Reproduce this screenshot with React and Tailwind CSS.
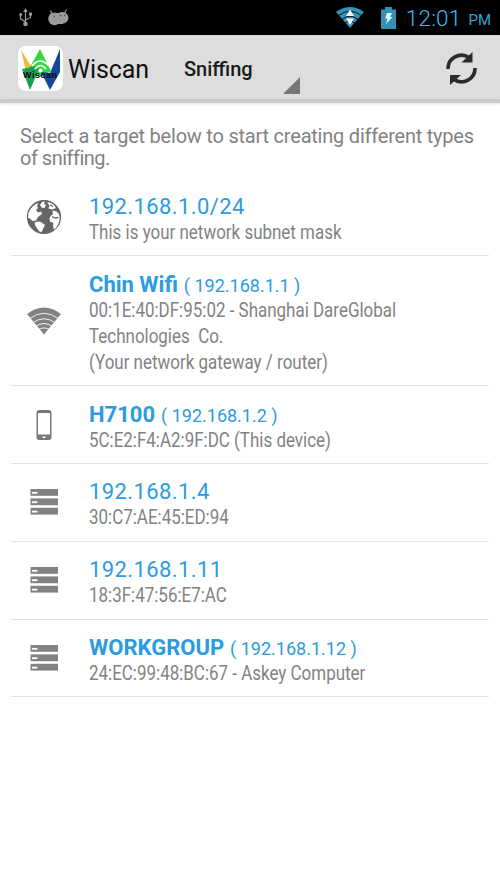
import { useState } from 'react';

const TARGETS = [
  { icon: 'globe', ip: '192.168.1.0/24', lines: ['This is your network subnet mask'] },
  {
    icon: 'wifi',
    name: 'Chin Wifi',
    ip: '192.168.1.1',
    lines: ['00:1E:40:DF:95:02 - Shanghai DareGlobal', 'Technologies  Co.', '(Your network gateway / router)'],
  },
  { icon: 'phone', name: 'H7100', ip: '192.168.1.2', lines: ['5C:E2:F4:A2:9F:DC (This device)'] },
  { icon: 'server', ip: '192.168.1.4', lines: ['30:C7:AE:45:ED:94'] },
  { icon: 'server', ip: '192.168.1.11', lines: ['18:3F:47:56:E7:AC'] },
  { icon: 'server', name: 'WORKGROUP', ip: '192.168.1.12', lines: ['24:EC:99:48:BC:67 - Askey Computer'] },
];

function GlobeIcon() {
  return (
    <svg width="36" height="36" viewBox="0 0 36 36">
      <circle cx="18" cy="18" r="16.4" fill="#666" stroke="#666" strokeWidth="1.4" />
      {/* oceans on the left, both continents at the bottom */}
      <path d="M9 5.500 L12.500 4 L11 7 L12 9 L10 11 L12 13.500 L15 12.500 L16 15 L12 18 L10 21.500 L6.500 22 L4 19.500 L2.200 19 L2.200 15 Q4 9 9 5.500 Z" fill="#fff" />
      <path d="M8.500 23.500 L12 22.500 L15 23 L19 26 L17.500 29 L16 32.500 L14 33 L11.500 30 L9.500 27 Z" fill="#fff" />
      <path d="M26.500 11.500 L30.500 12.500 L33 15 L33.800 19 L33 23.500 L30 29 L28 30.500 L27 27 L27.500 24 L24 22.500 L23.500 19 L25 16.500 L27 15.500 Z" fill="#fff" />
      <path d="M16 3 L19 2.500 L18 5 L20 6 L18.500 9 L15.500 8.500 L14 6 Z" fill="#fff" />
      <path d="M21 3.500 L24 3.500 L28 6 L30 9 L26 10.500 L22.500 9.500 L23.500 6.500 Z" fill="#fff" />
      <path d="M26 17.500 l3 1.500 l3.500 -0.500 M24 6 l3 1.500" fill="none" stroke="#666" strokeWidth="1.300" />
    </svg>
  );
}

function WifiIcon() {
  return (
    <svg width="36" height="28" viewBox="0 0 36 28">
      <path d="M1 7 Q18 -6 35 7 L18 27.500 Z" fill="#828282" />
      <g fill="none" stroke="#fff" strokeWidth="0.900">
        <path d="M3 12 Q18 0.500 33 12" />
        <path d="M6.500 16 Q18 7.500 29.500 16" />
        <path d="M9.500 19.500 Q18 13.500 26.500 19.500" />
        <path d="M12 22.800 Q18 19 24 22.800" />
      </g>
    </svg>
  );
}

function PhoneIcon() {
  return (
    <svg width="16" height="30" viewBox="0 0 16 30">
      <rect x="0.500" y="0" width="15" height="30" rx="3" fill="#777" />
      <rect x="2" y="3" width="12" height="21.500" fill="#fff" />
      <rect x="6.500" y="26.500" width="3" height="1.500" fill="#fff" />
    </svg>
  );
}

function ServerIcon() {
  return (
    <svg width="28" height="26" viewBox="0 0 28 26">
      {[0, 9.4, 18.8].map((y) => (
        <g key={y}>
          <rect x="0.500" y={y} width="27.500" height="6.800" fill="#828282" />
          <rect x="2" y={y + 2.9} width="5.500" height="1.800" fill="#fff" />
        </g>
      ))}
    </svg>
  );
}

const ICONS = { globe: GlobeIcon, wifi: WifiIcon, phone: PhoneIcon, server: ServerIcon };

function StatusBar() {
  return (
    <div className="flex h-[35px] items-center bg-black">
      <svg className="ml-[19px]" width="14" height="19" viewBox="0 0 14 19" fill="none" stroke="#9a9a9a" strokeWidth="1.2">
        <path d="M6.500 3v12M1.500 7.500v3.300l5 3M11.500 6v3.500l-5 2.500" />
        <path d="M6.500 0l2.300 4H4.200z" fill="#9a9a9a" stroke="none" />
        <circle cx="6.500" cy="16" r="2.300" fill="#9a9a9a" stroke="none" />
        <circle cx="1.700" cy="6.500" r="1.500" fill="#9a9a9a" stroke="none" />
        <path d="M10 4.500h3v3h-3z" fill="#9a9a9a" stroke="none" />
      </svg>
      <svg className="ml-[15px]" width="21" height="17" viewBox="0 0 21 17" fill="#9a9a9a">
        <path d="M2.500 1.500l2 4M18.500 0.500l-2 4" stroke="#9a9a9a" strokeWidth="1.200" />
        <ellipse cx="6.500" cy="9.800" rx="6.300" ry="6.400" />
        <ellipse cx="14" cy="8.800" rx="6.500" ry="5.800" />
        <rect x="6" y="4" width="9" height="11" />
        <g fill="#444">
          <circle cx="6.300" cy="7.300" r="0.700" />
          <circle cx="12.500" cy="6.500" r="0.700" />
          <circle cx="16.800" cy="6.500" r="0.700" />
        </g>
      </svg>
      <div className="flex-1" />
      <svg width="28" height="21" viewBox="0 0 28 21">
        <path d="M0 5 Q14 -5 28 5 L14 21 Z" fill="#3391b8" />
        <g fill="none" stroke="#000" strokeWidth="0.900">
          <path d="M2.500 8.500 Q14 0 25.500 8.500" />
          <path d="M6 12.500 Q14 6 22 12.500" />
          <path d="M9 16.300 Q14 12 19 16.300" />
        </g>
        <path d="M14 2.500l4 6.500h-8zM14 18l4-6.500h-8z" fill="#fff" />
      </svg>
      <svg className="ml-[17px]" width="15" height="22" viewBox="0 0 15 22">
        <path d="M4 0h7v2.500h4V22H0V2.500h4z" fill="#3391b8" />
        <path d="M6 6h5l-2 4h2.500L5 17l1.500-5.500H4z" fill="#e8f4f9" />
      </svg>
      <span className="ml-[10px] pt-[2px] text-[22.5px] leading-[33px] tracking-[0.2px] text-[#3abdf0] font-light">12:01</span>
      <span className="mr-[9px] ml-[7px] pt-[6px] text-[15px] text-[#2fa5d2]">PM</span>
    </div>
  );
}

function Logo() {
  return (
    <svg className="ml-[17.5px]" width="45" height="45" viewBox="0 0 45 45">
      <rect width="45" height="45" rx="8" fill="#fff" />
      <path d="M3 4 L15.500 24 L12 43 Z" fill="#f1b83f" />
      <path d="M22 3 L33 25 L22 31 L12 21 Z" fill="#35d63e" />
      <path d="M4 23 L19 20 L21 23 L12 44 Z" fill="#18a052" />
      <path d="M42 3 L42 26 L32 44 L23 26 L32 27 Z" fill="#154899" />
      <g fill="none" stroke="#fff" strokeWidth="1.700">
        <path d="M14 20q8-10 17 0" />
        <path d="M17 23q5.500-7 11 0" />
      </g>
      <circle cx="22.500" cy="24.500" r="2" fill="#fff" />
      <text x="5" y="31.500" fontSize="9" fontWeight="900" textLength="34" fontFamily="Liberation Sans, sans-serif" fill="#080808">
        Wiscan
      </text>
    </svg>
  );
}

function ActionBar({ onRefresh }) {
  return (
    <header className="flex h-[68px] items-stretch border-b-4 border-[#cbcbcb] bg-[#ddd] shadow-[0_1px_3px_rgba(0,0,0,0.12)]">
      <div className="flex items-center pt-[3px]">
        <Logo />
        <span className="ml-[5.5px] w-[81px] pt-[2px] text-[25px] tracking-[-0.1px] text-[#111]">Wiscan</span>
      </div>
      <button className="ml-[35px] flex w-[116px] items-end justify-between pb-[5px]">
        <span className="self-center pt-[9px] text-[20px] font-medium text-[#1a1a1a]">Sniffing</span>
        <svg width="17" height="17" viewBox="0 0 17 17">
          <path d="M17 0v17H0z" fill="#777" />
        </svg>
      </button>
      <button className="mr-[22px] ml-auto pt-[2px]" onClick={onRefresh} aria-label="Rescan network">
        <svg width="33" height="35" viewBox="0 0 33 35" fill="none" stroke="#2b2b2b" strokeWidth="3.600">
          <path d="M3 18 A13.500 13.500 0 0 1 24 6.500" />
          <path d="M30 17 A13.500 13.500 0 0 1 9 28.500" />
          <path d="M27.500 1v10.500H16.500z M5 34V24h11z" fill="#2b2b2b" stroke="none" />
        </svg>
      </button>
    </header>
  );
}

function TargetRow({ target }) {
  const Icon = ICONS[target.icon];
  return (
    <li className="flex items-center border-b border-[#e4e4e4]">
      <div className="flex w-[66px] shrink-0 justify-center">
        <Icon />
      </div>
      <div className="ml-[12px] pt-[14.5px] pb-[10.3px] whitespace-pre">
        <p className="h-[26px] text-[22px] leading-[28px] text-[#2c9be0]">
          {target.name ? (
            <>
              <span className="font-bold">{target.name}</span>
              <span className="ml-[6px] text-[18px]">( {target.ip} )</span>
            </>
          ) : (
            <span className="tracking-[0.4px]">{target.ip}</span>
          )}
        </p>
        {target.lines.map((line) => (
          <p key={line} className="h-[26px] origin-left scale-x-[0.848] text-[20px] leading-[26px] text-[#828282]">
            {line}
          </p>
        ))}
      </div>
    </li>
  );
}

export default function App() {
  const [targets, setTargets] = useState(TARGETS);

  return (
    <div className="min-h-[889px] w-[500px] overflow-hidden bg-white font-['Roboto',sans-serif]">
      <StatusBar />
      <ActionBar onRefresh={() => setTargets([...TARGETS])} />
      <p className="mt-[22px] ml-[20px] text-[20px] leading-[22px] tracking-[-0.22px] whitespace-nowrap text-[#828282]">
        Select a target below to start creating different types
        <br />
        <span className="tracking-[-0.5px]">of sniffing.</span>
      </p>
      <ul className="mx-[11px] mt-[9.6px]">
        {targets.map((target) => (
          <TargetRow key={target.ip} target={target} />
        ))}
      </ul>
    </div>
  );
}
